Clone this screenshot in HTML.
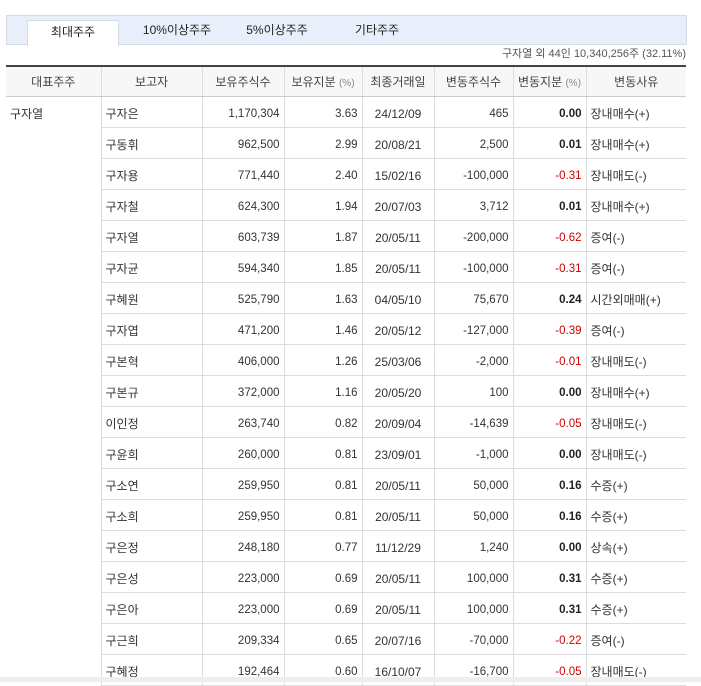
<!DOCTYPE html>
<html><head><meta charset="utf-8"><style>
body{margin:0;background:#fff;font-family:"Liberation Sans","Noto Sans CJK KR",sans-serif;font-size:12px;color:#333;width:701px;height:682px;overflow:hidden;position:relative}
.tabs{position:absolute;left:6px;top:15px;width:679px;height:28px;background:#e8effa;border:1px solid #d3dbe8}
.tab{position:absolute;top:0;height:29px;line-height:29px;text-align:center;font-size:12px;color:#222}
.tab.on{background:#fff;border:1px solid #d3dbe8;border-bottom:none;top:4px;height:25px;line-height:22px;left:20px;width:90px}
.sum{position:absolute;right:15px;top:45px;font-size:11px;color:#555}
table{position:absolute;left:6px;top:65px;width:680px;border-collapse:collapse;border-top:2px solid #444;table-layout:fixed}
th{height:29px;padding:0;background:#f7f7f7;font-weight:normal;color:#444;font-size:12px;border-left:1px solid #ddd;border-bottom:1px solid #ccc}
th small{font-size:10px;color:#888}
td{height:27px;padding:3px 4px 0;border-left:1px solid #ddd;border-bottom:1px solid #ddd;font-size:12px;white-space:nowrap}
td.r,td.b,td.n{font-size:11.5px}
th:first-child,td:first-child{border-left:none}
td.r{text-align:right}td.c{text-align:center}
td.b{text-align:right;font-weight:bold;color:#222}
td.n{text-align:right;color:#c00}
td.e{border-bottom:none}
.bar{position:absolute;left:0;top:677px;width:701px;height:5px;background:#eee}
</style></head><body>
<div class="tabs">
<div class="tab on">최대주주</div>
<div class="tab" style="left:120px;width:100px">10%이상주주</div>
<div class="tab" style="left:220px;width:100px">5%이상주주</div>
<div class="tab" style="left:325px;width:90px">기타주주</div>
</div>
<div class="sum">구자열 외 44인 10,340,256주 (32.11%)</div>
<table>
<colgroup><col style="width:95px"><col style="width:101px"><col style="width:82px"><col style="width:78px"><col style="width:72px"><col style="width:79px"><col style="width:73px"><col></colgroup>
<tr><th>대표주주</th><th>보고자</th><th>보유주식수</th><th>보유지분 <small>(%)</small></th><th>최종거래일</th><th>변동주식수</th><th>변동지분 <small>(%)</small></th><th>변동사유</th></tr>
<tr><td class="e">구자열</td><td>구자은</td><td class="r">1,170,304</td><td class="r">3.63</td><td class="c">24/12/09</td><td class="r">465</td><td class="b">0.00</td><td>장내매수(+)</td></tr>
<tr><td class="e"></td><td>구동휘</td><td class="r">962,500</td><td class="r">2.99</td><td class="c">20/08/21</td><td class="r">2,500</td><td class="b">0.01</td><td>장내매수(+)</td></tr>
<tr><td class="e"></td><td>구자용</td><td class="r">771,440</td><td class="r">2.40</td><td class="c">15/02/16</td><td class="r">-100,000</td><td class="n">-0.31</td><td>장내매도(-)</td></tr>
<tr><td class="e"></td><td>구자철</td><td class="r">624,300</td><td class="r">1.94</td><td class="c">20/07/03</td><td class="r">3,712</td><td class="b">0.01</td><td>장내매수(+)</td></tr>
<tr><td class="e"></td><td>구자열</td><td class="r">603,739</td><td class="r">1.87</td><td class="c">20/05/11</td><td class="r">-200,000</td><td class="n">-0.62</td><td>증여(-)</td></tr>
<tr><td class="e"></td><td>구자균</td><td class="r">594,340</td><td class="r">1.85</td><td class="c">20/05/11</td><td class="r">-100,000</td><td class="n">-0.31</td><td>증여(-)</td></tr>
<tr><td class="e"></td><td>구혜원</td><td class="r">525,790</td><td class="r">1.63</td><td class="c">04/05/10</td><td class="r">75,670</td><td class="b">0.24</td><td>시간외매매(+)</td></tr>
<tr><td class="e"></td><td>구자엽</td><td class="r">471,200</td><td class="r">1.46</td><td class="c">20/05/12</td><td class="r">-127,000</td><td class="n">-0.39</td><td>증여(-)</td></tr>
<tr><td class="e"></td><td>구본혁</td><td class="r">406,000</td><td class="r">1.26</td><td class="c">25/03/06</td><td class="r">-2,000</td><td class="n">-0.01</td><td>장내매도(-)</td></tr>
<tr><td class="e"></td><td>구본규</td><td class="r">372,000</td><td class="r">1.16</td><td class="c">20/05/20</td><td class="r">100</td><td class="b">0.00</td><td>장내매수(+)</td></tr>
<tr><td class="e"></td><td>이인정</td><td class="r">263,740</td><td class="r">0.82</td><td class="c">20/09/04</td><td class="r">-14,639</td><td class="n">-0.05</td><td>장내매도(-)</td></tr>
<tr><td class="e"></td><td>구윤희</td><td class="r">260,000</td><td class="r">0.81</td><td class="c">23/09/01</td><td class="r">-1,000</td><td class="b">0.00</td><td>장내매도(-)</td></tr>
<tr><td class="e"></td><td>구소연</td><td class="r">259,950</td><td class="r">0.81</td><td class="c">20/05/11</td><td class="r">50,000</td><td class="b">0.16</td><td>수증(+)</td></tr>
<tr><td class="e"></td><td>구소희</td><td class="r">259,950</td><td class="r">0.81</td><td class="c">20/05/11</td><td class="r">50,000</td><td class="b">0.16</td><td>수증(+)</td></tr>
<tr><td class="e"></td><td>구은정</td><td class="r">248,180</td><td class="r">0.77</td><td class="c">11/12/29</td><td class="r">1,240</td><td class="b">0.00</td><td>상속(+)</td></tr>
<tr><td class="e"></td><td>구은성</td><td class="r">223,000</td><td class="r">0.69</td><td class="c">20/05/11</td><td class="r">100,000</td><td class="b">0.31</td><td>수증(+)</td></tr>
<tr><td class="e"></td><td>구은아</td><td class="r">223,000</td><td class="r">0.69</td><td class="c">20/05/11</td><td class="r">100,000</td><td class="b">0.31</td><td>수증(+)</td></tr>
<tr><td class="e"></td><td>구근희</td><td class="r">209,334</td><td class="r">0.65</td><td class="c">20/07/16</td><td class="r">-70,000</td><td class="n">-0.22</td><td>증여(-)</td></tr>
<tr><td class="e"></td><td>구혜정</td><td class="r">192,464</td><td class="r">0.60</td><td class="c">16/10/07</td><td class="r">-16,700</td><td class="n">-0.05</td><td>장내매도(-)</td></tr>
</table>
<div class="bar"></div>
</body></html>
